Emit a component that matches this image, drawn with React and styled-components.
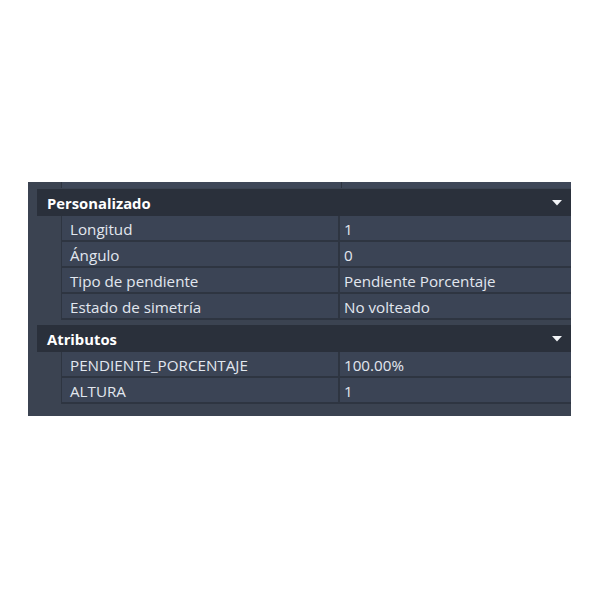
import React from "react";
import styled, { createGlobalStyle } from "styled-components";

const GlobalStyle = createGlobalStyle`
	body {
		margin: 0;
		background: #fff;
		font-family: "Open Sans", "Noto Sans", sans-serif;
	}
`;

const sections = [
	{
		title: "Personalizado",
		rows: [
			["Longitud", "1"],
			["Ángulo", "0"],
			["Tipo de pendiente", "Pendiente Porcentaje"],
			["Estado de simetría", "No volteado"],
		],
	},
	{
		title: "Atributos",
		rows: [
			["PENDIENTE_PORCENTAJE", "100.00%"],
			["ALTURA", "1"],
		],
	},
];

const App = () => {
	return (
		<Page>
			<GlobalStyle />
			<Panel>
				<TopStrip>
					<Cell w="279px" />
					<Cell />
				</TopStrip>
				{sections.map((s, i) => (
					<Section key={s.title} first={i === 0}>
						<Header>
							<span>{s.title}</span>
							<Caret viewBox="0 0 10 6" width="10" height="6">
								<path d="M0 0 H10 L5 5.5 Z" fill="#f2f4f7" />
							</Caret>
						</Header>
						{s.rows.map((r) => (
							<Row key={r[0]}>
								<Label>{r[0]}</Label>
								<Value>{r[1]}</Value>
							</Row>
						))}
					</Section>
				))}
			</Panel>
		</Page>
	);
};

export default App;

const Page = styled.div`
	width: 600px;
	height: 600px;
	padding: 182px 0 0 28px;
	box-sizing: border-box;
`;

const Panel = styled.div`
	width: 543px;
	height: 234px;
	background-color: #3b4351;
	padding-bottom: 12px;
	box-sizing: border-box;
	color: #e2e7ef;
	font-size: 15.2px;
`;

const TopStrip = styled.div`
	height: 6px;
	margin-left: 33px;
	display: flex;
	background-color: #3e4758;
	border-left: 1px solid #2e3541;
`;

const Cell = styled.div`
	width: ${(p) => p.w || "auto"};
	flex: ${(p) => (p.w ? "none" : "1")};
	border-right: ${(p) => (p.w ? "1px solid #2e3541" : "none")};
`;

const Section = styled.div`
	margin-top: ${(p) => (p.first ? "1px" : "5px")};
`;

const Header = styled.div`
	height: 27px;
	margin-left: 9px;
	background-color: #2a303b;
	display: flex;
	align-items: center;
	justify-content: space-between;
	padding: 0 9px 0 10px;
	font-weight: 700;
	color: #ffffff;
	font-size: 14.8px;
`;

const Caret = styled.svg`
	display: block;
	margin-top: 1px;
`;

const Row = styled.div`
	height: 26px;
	margin-left: 33px;
	display: flex;
	background-color: #3b4455;
	border-left: 1px solid #2e3541;
	border-bottom: 2px solid #2e3541;
	box-sizing: border-box;
`;

const Label = styled.div`
	width: 278px;
	padding: 2px 0 0 8px;
	box-sizing: border-box;
	border-right: 2px solid #2e3541;
	display: flex;
	align-items: center;
	white-space: nowrap;
`;

const Value = styled.div`
	flex: 1;
	padding: 2px 0 0 4px;
	display: flex;
	align-items: center;
`;
